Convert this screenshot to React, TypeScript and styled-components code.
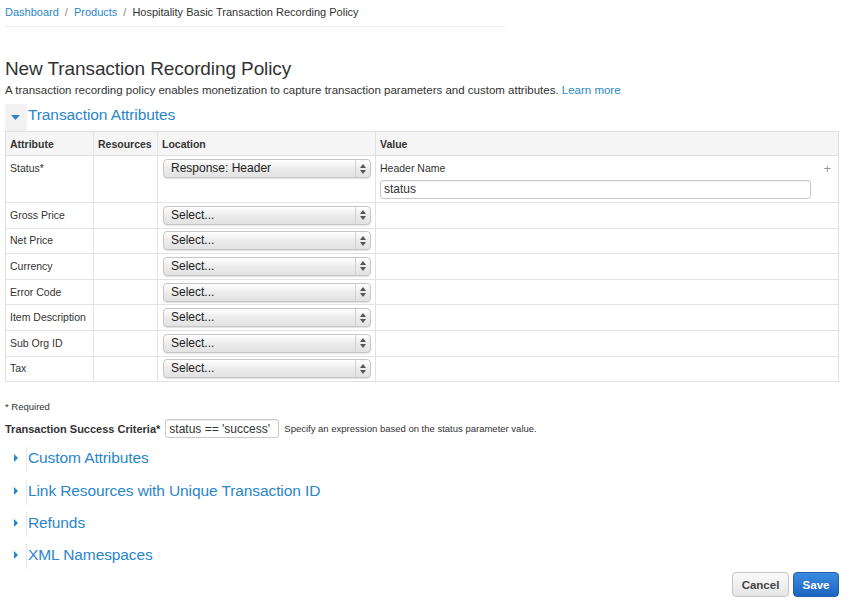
import React from "react";
import styled, { createGlobalStyle } from "styled-components";

const Global = createGlobalStyle`
  html, body { margin: 0; padding: 0; background: #fff; }
  body { font-family: "Liberation Sans", Arial, sans-serif; color: #333; }
  * { box-sizing: border-box; }
`;

const Page = styled.div`
  width: 851px;
  height: 611px;
  padding: 0 12px 0 5px;
  display: flex;
  flex-direction: column;
  position: relative;
`;

const Breadcrumb = styled.nav`
  width: 500px;
  height: 27px;
  padding-top: 6px;
  font-size: 11px;
  border-bottom: 1px solid #eeeeee;
  display: flex;
  gap: 6px;
`;

const Crumb = styled.a`
  color: #2a86c9;
  text-decoration: none;
`;

const Sep = styled.span`
  color: #888;
`;

const Title = styled.h1`
  margin: 30px 0 0;
  font-size: 19px;
  font-weight: normal;
  line-height: 24px;
  color: #333;
  letter-spacing: -0.1px;
`;

const Lead = styled.p`
  margin: 0;
  margin-top: 2px;
  font-size: 11.5px;
  line-height: 14px;
`;

const Link = styled.a`
  color: #2a86c9;
  text-decoration: none;
`;

const SectionHead = styled.div<{ $open?: boolean; $mt: number }>`
  display: flex;
  align-items: stretch;
  margin-top: ${(p) => p.$mt}px;
  height: ${(p) => (p.$open ? 27 : 25)}px;
`;

const Toggle = styled.div<{ $open?: boolean }>`
  width: 22px;
  display: flex;
  align-items: ${(p) => (p.$open ? "center" : "flex-start")};
  padding-top: ${(p) => (p.$open ? 0 : 7)}px;
  justify-content: center;
  background: ${(p) => (p.$open ? "#f2f2f2" : "transparent")};
  border-right: 1px solid ${(p) => (p.$open ? "#f2f2f2" : "#e8e8e8")};
`;

const SectionTitle = styled.span`
  font-size: 15.5px;
  color: #2a86c9;
  padding-left: 1px;
  line-height: 22px;
  letter-spacing: -0.1px;
`;

const Table = styled.table`
  width: 834px;
  table-layout: fixed;
  border-collapse: collapse;
  border: 1px solid #dddddd;
  font-size: 10.5px;
`;

const Th = styled.th<{ $w?: number }>`
  text-align: left;
  font-weight: bold;
  background: #f5f5f5;
  border: 1px solid #e0e0e0;
  height: 24px;
  padding: 0 4px;
  white-space: nowrap;
  width: ${(p) => (p.$w ? `${p.$w}px` : "auto")};
`;

const Td = styled.td<{ $tall?: boolean }>`
  border: 1px solid #e3e3e3;
  height: ${(p) => (p.$tall ? 47 : 25.6)}px;
  padding: ${(p) => (p.$tall ? "3px 4px" : "0 4px")};
  line-height: 19px;
  white-space: nowrap;
  vertical-align: ${(p) => (p.$tall ? "top" : "middle")};
`;

const LocTd = styled(Td)`
  padding-left: 5px;
`;

const Select = styled.div`
  width: 208px;
  height: 19px;
  border-radius: 4px;
  border: 1px solid #c6c6c6;
  background: linear-gradient(#ffffff, #ececec 50%, #e2e2e2);
  box-shadow: 0 1px 1px rgba(0,0,0,0.12);
  display: flex;
  align-items: center;
  font-size: 12px;
  color: #222;
`;

const SelectLabel = styled.span`
  flex: 1;
  padding-left: 7px;
`;

const SelectArrows = styled.span`
  width: 15px;
  height: 100%;
  border-left: 1px solid #d2d2d2;
  display: flex;
  align-items: center;
  justify-content: center;
`;

const ValueCell = styled.div`
  display: flex;
  flex-direction: column;
  gap: 2px;
  position: relative;
`;

const FieldLabel = styled.span`
  font-size: 10.5px;
  line-height: 19px;
`;

const TextInput = styled.div<{ $w: number }>`
  width: ${(p) => p.$w}px;
  height: 19px;
  border: 1px solid #c9c9c9;
  border-radius: 3px;
  font-size: 12px;
  display: flex;
  align-items: center;
  padding-left: 3px;
  box-shadow: inset 0 1px 1px rgba(0,0,0,0.06);
`;

const Plus = styled.span`
  position: absolute;
  right: 3px;
  top: 3px;
  color: #999;
  font-size: 13px;
  line-height: 13px;
`;

const Required = styled.div`
  margin-top: 19px;
  font-size: 9.5px;
  line-height: 12px;
`;

const CriteriaRow = styled.div`
  display: flex;
  align-items: center;
  gap: 5px;
  margin-top: 5px;
  height: 21px;
`;

const CriteriaLabel = styled.span`
  font-weight: bold;
  font-size: 11px;
`;

const Hint = styled.span`
  font-size: 9.5px;
`;

const Footer = styled.div`
  display: flex;
  justify-content: flex-end;
  gap: 4px;
  margin-top: auto;
  margin-bottom: 14px;
`;

const Button = styled.button<{ $primary?: boolean }>`
  height: 25px;
  width: ${(p) => (p.$primary ? 46 : 57)}px;
  padding: 0;
  border-radius: 4px;
  font-family: "Liberation Sans", Arial, sans-serif;
  font-weight: bold;
  font-size: 11.5px;
  cursor: pointer;
  border: 1px solid ${(p) => (p.$primary ? "#1d5fa8" : "#c4c4c4")};
  color: ${(p) => (p.$primary ? "#fff" : "#444")};
  background: ${(p) =>
    p.$primary
      ? "linear-gradient(#3a8ddf, #1b64c0)"
      : "linear-gradient(#fafafa, #e6e6e6)"};
`;

const Caret = ({ open }: { open?: boolean }) =>
  open ? (
    <svg width="9" height="5" viewBox="0 0 9 5">
      <path d="M0 0H9L4.5 5Z" fill="#2a86c9" />
    </svg>
  ) : (
    <svg width="4" height="8" viewBox="0 0 4 8">
      <path d="M0 0L4 4L0 8Z" fill="#2a86c9" />
    </svg>
  );

const Arrows = () => (
  <svg width="6" height="10" viewBox="0 0 6 10">
    <path d="M0 4L3 0L6 4Z M0 6L3 10L6 6Z" fill="#555" />
  </svg>
);

const SelectBox = ({ label }: { label: string }) => (
  <Select>
    <SelectLabel>{label}</SelectLabel>
    <SelectArrows>
      <Arrows />
    </SelectArrows>
  </Select>
);

const rows = [
  "Gross Price",
  "Net Price",
  "Currency",
  "Error Code",
  "Item Description",
  "Sub Org ID",
  "Tax",
];

const Section = ({ title, open, mt }: { title: string; open?: boolean; mt: number }) => (
  <SectionHead $open={open} $mt={mt}>
    <Toggle $open={open}>
      <Caret open={open} />
    </Toggle>
    <SectionTitle>{title}</SectionTitle>
  </SectionHead>
);

export default function App() {
  return (
    <Page>
      <Global />
      <Breadcrumb>
        <Crumb>Dashboard</Crumb>
        <Sep>/</Sep>
        <Crumb>Products</Crumb>
        <Sep>/</Sep>
        <span>Hospitality Basic Transaction Recording Policy</span>
      </Breadcrumb>
      <Title>New Transaction Recording Policy</Title>
      <Lead>
        A transaction recording policy enables monetization to capture transaction parameters and
        custom attributes. <Link>Learn more</Link>
      </Lead>
      <Section title="Transaction Attributes" open mt={7} />
      <Table>
        <thead>
          <tr>
            <Th $w={88}>Attribute</Th>
            <Th $w={64}>Resources</Th>
            <Th $w={218}>Location</Th>
            <Th>Value</Th>
          </tr>
        </thead>
        <tbody>
          <tr>
            <Td $tall>Status*</Td>
            <Td $tall />
            <LocTd $tall>
              <SelectBox label="Response: Header" />
            </LocTd>
            <Td $tall>
              <ValueCell>
                <FieldLabel>Header Name</FieldLabel>
                <TextInput $w={431}>status</TextInput>
                <Plus>+</Plus>
              </ValueCell>
            </Td>
          </tr>
          {rows.map((r) => (
            <tr key={r}>
              <Td>{r}</Td>
              <Td />
              <LocTd>
                <SelectBox label="Select..." />
              </LocTd>
              <Td />
            </tr>
          ))}
        </tbody>
      </Table>
      <Required>* Required</Required>
      <CriteriaRow>
        <CriteriaLabel>Transaction Success Criteria*</CriteriaLabel>
        <TextInput $w={114}>status == 'success'</TextInput>
        <Hint>Specify an expression based on the status parameter value.</Hint>
      </CriteriaRow>
      <Section title="Custom Attributes" mt={8} />
      <Section title="Link Resources with Unique Transaction ID" mt={8} />
      <Section title="Refunds" mt={7} />
      <Section title="XML Namespaces" mt={7} />
      <Footer>
        <Button>Cancel</Button>
        <Button $primary>Save</Button>
      </Footer>
    </Page>
  );
}
